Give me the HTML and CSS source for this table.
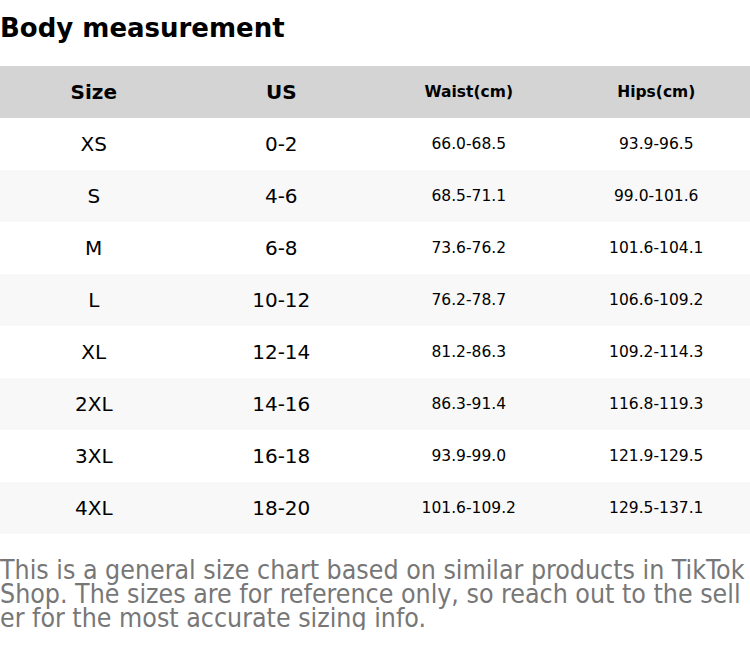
FILE: index.html
```html
<!DOCTYPE html>
<html>
<head>
<meta charset="utf-8">
<link rel="stylesheet" href="styles.css">
</head>
<body>
<h1 class="title">Body measurement</h1>
<table class="chart">
  <thead>
    <tr><th class="big">Size</th><th class="big">US</th><th class="small">Waist(cm)</th><th class="small">Hips(cm)</th></tr>
  </thead>
  <tbody>
    <tr><td class="big">XS</td><td class="big">0-2</td><td class="small">66.0-68.5</td><td class="small">93.9-96.5</td></tr>
    <tr><td class="big">S</td><td class="big">4-6</td><td class="small">68.5-71.1</td><td class="small">99.0-101.6</td></tr>
    <tr><td class="big">M</td><td class="big">6-8</td><td class="small">73.6-76.2</td><td class="small">101.6-104.1</td></tr>
    <tr><td class="big">L</td><td class="big">10-12</td><td class="small">76.2-78.7</td><td class="small">106.6-109.2</td></tr>
    <tr><td class="big">XL</td><td class="big">12-14</td><td class="small">81.2-86.3</td><td class="small">109.2-114.3</td></tr>
    <tr><td class="big">2XL</td><td class="big">14-16</td><td class="small">86.3-91.4</td><td class="small">116.8-119.3</td></tr>
    <tr><td class="big">3XL</td><td class="big">16-18</td><td class="small">93.9-99.0</td><td class="small">121.9-129.5</td></tr>
    <tr><td class="big">4XL</td><td class="big">18-20</td><td class="small">101.6-109.2</td><td class="small">129.5-137.1</td></tr>
  </tbody>
</table>
<p class="note">This is a general size chart based on similar products in TikTok Shop. The sizes are for reference only, so reach out to the seller for the most accurate sizing info.</p>
</body>
</html>
```
FILE: styles.css
```css
html, body {
  margin: 0;
  padding: 0;
  background: #fff;
  font-family: "DejaVu Sans", sans-serif;
  color: #000;
}
.title {
  margin: 0;
  padding: 12px 0 22px 0;
  font-size: 26px;
  line-height: 32px;
  font-weight: bold;
}
.chart {
  width: 750px;
  border-collapse: collapse;
  table-layout: fixed;
}
.chart th, .chart td {
  height: 52px;
  padding: 0;
  text-align: center;
  vertical-align: middle;
}
.chart thead tr {
  background: #d4d4d4;
}
.chart tbody tr:nth-child(even) {
  background: #f8f8f8;
}
.chart th.big { font-size: 20px; font-weight: bold; }
.chart th.small { font-size: 15.5px; font-weight: bold; }
.chart td.big { font-size: 20px; }
.chart td.small { font-size: 15.5px; }
.note {
  margin: 24px 0 0 0;
  font-family: "DejaVu Sans Condensed", "DejaVu Sans", sans-serif;
  font-stretch: condensed;
  font-size: 26.5px;
  line-height: 24px;
  color: #777;
  word-break: break-all;
}
```
